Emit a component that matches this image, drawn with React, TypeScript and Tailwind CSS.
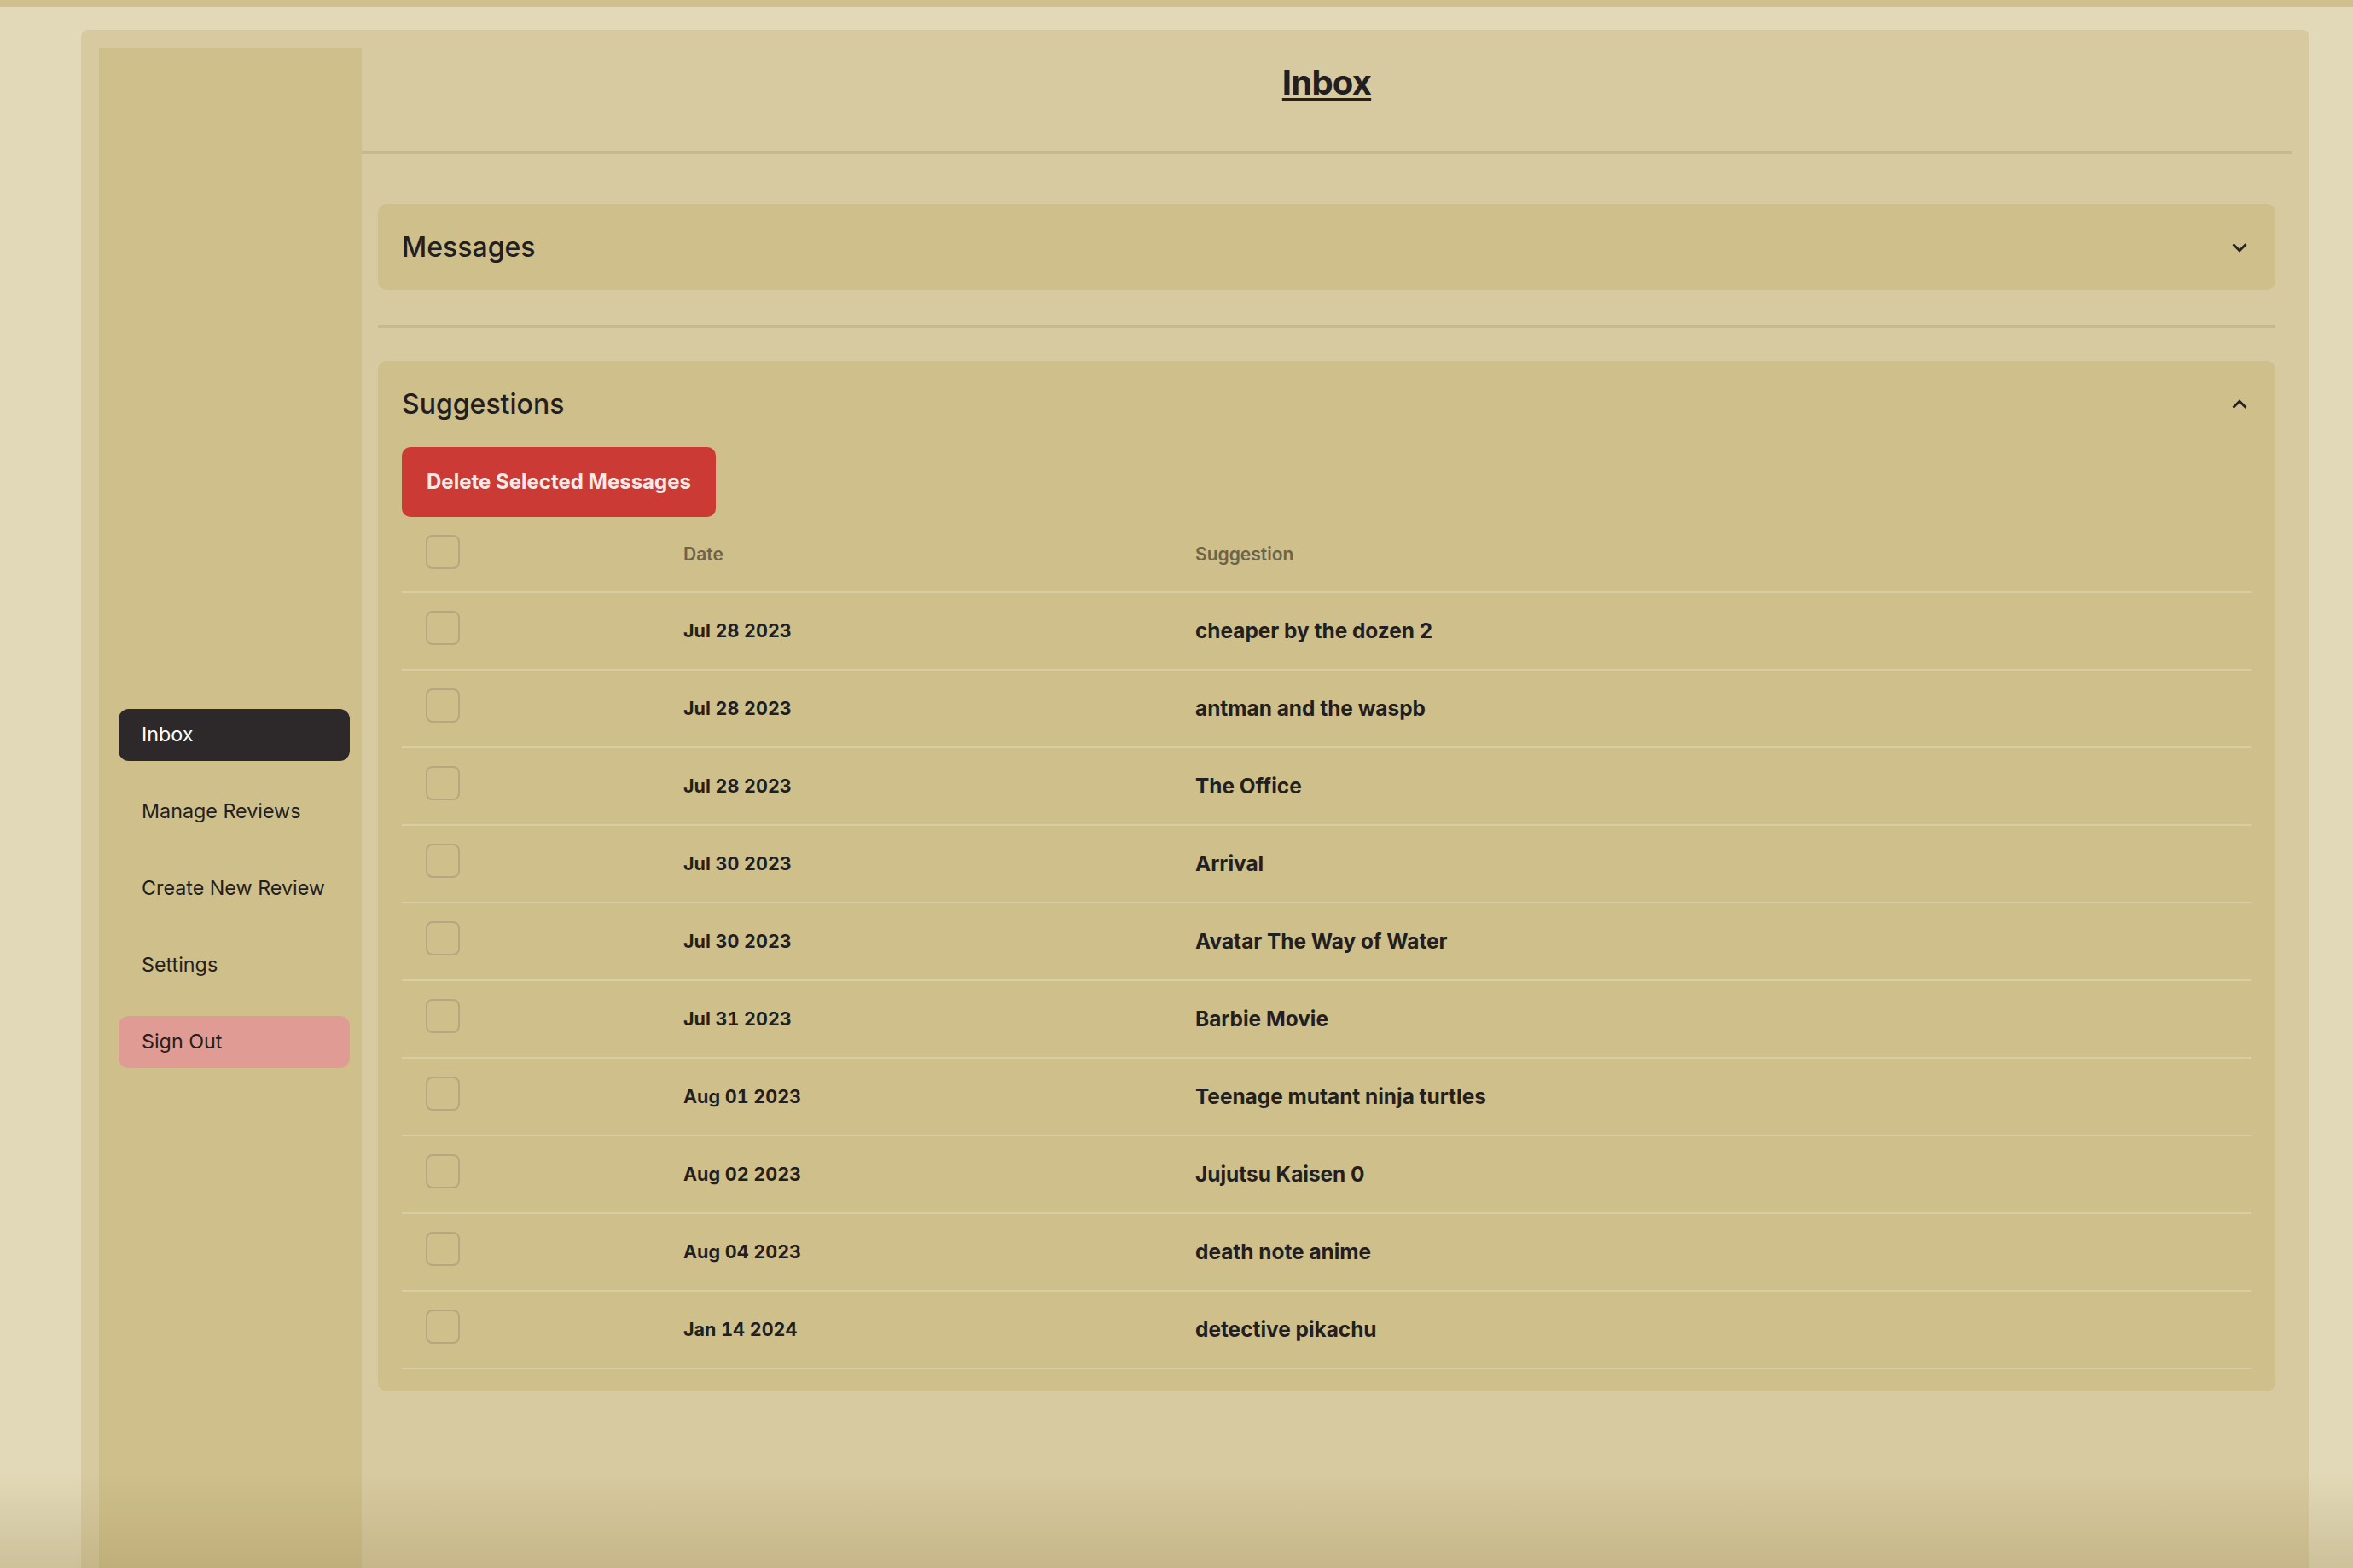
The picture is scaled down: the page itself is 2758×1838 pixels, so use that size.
import React from 'react';

const suggestions = [
  { date: 'Jul 28 2023', text: 'cheaper by the dozen 2' },
  { date: 'Jul 28 2023', text: 'antman and the waspb' },
  { date: 'Jul 28 2023', text: 'The Office' },
  { date: 'Jul 30 2023', text: 'Arrival' },
  { date: 'Jul 30 2023', text: 'Avatar The Way of Water' },
  { date: 'Jul 31 2023', text: 'Barbie Movie' },
  { date: 'Aug 01 2023', text: 'Teenage mutant ninja turtles' },
  { date: 'Aug 02 2023', text: 'Jujutsu Kaisen 0' },
  { date: 'Aug 04 2023', text: 'death note anime' },
  { date: 'Jan 14 2024', text: 'detective pikachu' },
];

function Chevron({ up = false }: { up?: boolean }) {
  return (
    <svg
      width="34"
      height="34"
      viewBox="0 0 24 24"
      className={up ? 'rotate-180' : ''}
      fill="#262224"
    >
      <path d="M16.59 8.59L12 13.17 7.41 8.59 6 10l6 6 6-6z" />
    </svg>
  );
}

function Checkbox() {
  return <div className="w-[40px] h-[40px] rounded-[8px] border-2 border-[#b4a781]" />;
}

function NavItem({ label, variant }: { label: string; variant?: 'active' | 'danger' }) {
  const tone =
    variant === 'active'
      ? 'bg-[#2d292a] text-white'
      : variant === 'danger'
        ? 'bg-[#e09b95] text-[#231f20]'
        : 'text-[#231f20]';
  return (
    <div className={`h-[61px] w-[271px] rounded-[12px] flex items-center pl-[27px] text-[23.3px] ${tone}`}>
      {label}
    </div>
  );
}

export default function App() {
  return (
    <div className="min-h-screen bg-[#e2d9b8] font-['Inter',sans-serif] text-[#231f20] relative overflow-hidden">
      <div className="h-[8px] bg-[#d0c08e]" />
      <div className="pt-[27px] pl-[95px] pr-[51px]">
        <div className="rounded-t-[8px] bg-[#d8caa0] px-[21px] pt-[21px] flex min-h-[1820px]">
          {/* sidebar */}
          <aside className="w-[308px] shrink-0 bg-[#cfbf8b] pt-[775px] pl-[23px] flex flex-col gap-[29px]">
            <NavItem label="Inbox" variant="active" />
            <NavItem label="Manage Reviews" />
            <NavItem label="Create New Review" />
            <NavItem label="Settings" />
            <NavItem label="Sign Out" variant="danger" />
          </aside>

          {/* main */}
          <main className="flex-1 min-w-0">
            <header className="pt-[17px] pb-[56px] border-b-[3px] border-[#c6b98f] flex justify-center">
              <h1 className="text-[40px] leading-[48px] font-bold underline decoration-[3px] underline-offset-[4px] tracking-[-0.8px]">
                Inbox
              </h1>
            </header>

            <div className="px-[19px]">
              <div className="mt-[59px] h-[101px] rounded-[10px] bg-[#cfbf8b] flex items-center justify-between pl-[28px] pr-[25px]">
                <span className="text-[32px] font-medium">Messages</span>
                <Chevron />
              </div>

              <div className="mt-[41px] h-[3px] bg-[#c6b98f]" />

              <section className="mt-[39px] rounded-[10px] bg-[#cfbf8b] px-[28px] pb-[26px]">
                <div className="h-[101px] flex items-center justify-between -mr-[3px]">
                  <span className="text-[32px] font-medium">Suggestions</span>
                  <Chevron up />
                </div>

                <button className="h-[82px] px-[29px] rounded-[10px] bg-[#cb3a34] text-[#fbe9e6] text-[24px] font-bold">
                  Delete Selected Messages
                </button>

                <div>
                  <div className="grid grid-cols-[330px_600px_1fr] items-center h-[89px] border-b-2 border-[#d9cea3]">
                    <div className="pl-[28px] -mt-[6px]">
                      <Checkbox />
                    </div>
                    <div className="text-[21px] font-semibold text-[#6c6448]">Date</div>
                    <div className="text-[21px] font-semibold text-[#6c6448]">Suggestion</div>
                  </div>
                  {suggestions.map((s, i) => (
                    <div
                      key={i}
                      className="grid grid-cols-[330px_600px_1fr] items-center h-[91px] border-b-2 border-[#d9cea3]"
                    >
                      <div className="pl-[28px] -mt-[8px]">
                        <Checkbox />
                      </div>
                      <div className="text-[21.5px] font-bold tabular-nums">{s.date}</div>
                      <div className="text-[24.4px] font-bold">{s.text}</div>
                    </div>
                  ))}
                </div>
              </section>
            </div>
          </main>
        </div>
      </div>
      <div className="pointer-events-none absolute inset-x-0 bottom-0 h-[130px] bg-gradient-to-b from-transparent to-[#9c8a55]/35" />
    </div>
  );
}
